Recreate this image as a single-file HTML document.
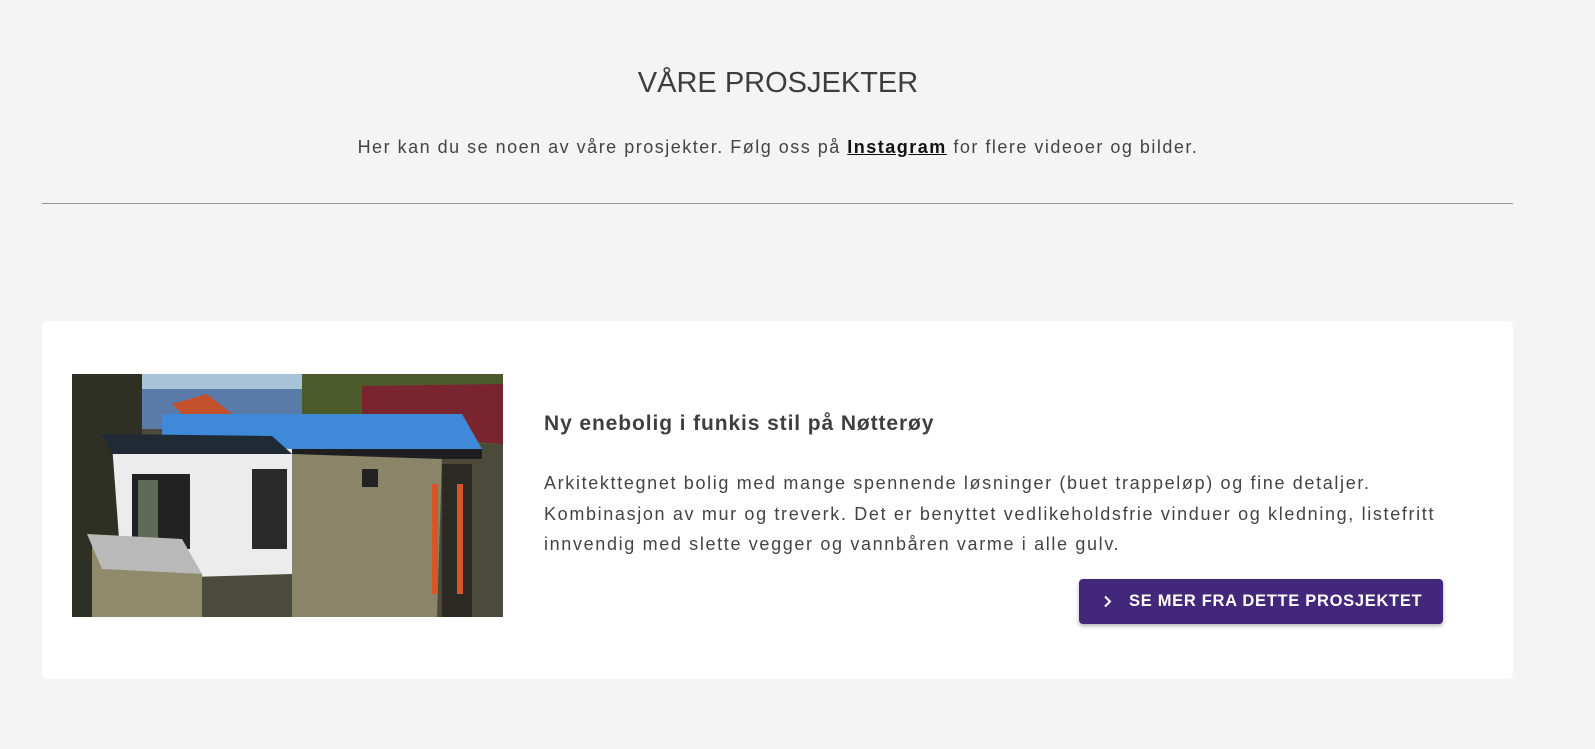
<!DOCTYPE html>
<html><head><meta charset="utf-8"><style>
body{margin:0;background:#f4f4f4;font-family:"Liberation Sans",sans-serif;color:#444;width:1595px;height:749px;overflow:hidden;position:relative}
h1{position:absolute;top:67px;left:0;width:1556px;text-align:center;margin:0;font-weight:normal;font-size:29px;color:#3d3d3d;letter-spacing:0}
.sub{position:absolute;top:137px;left:0;width:1556px;text-align:center;font-size:18px;color:#444;letter-spacing:1.5px}
.sub a{color:#111;font-weight:bold;text-decoration:underline}
.hr{position:absolute;top:203px;left:42px;width:1471px;height:1px;background:#999}
.card{position:absolute;left:42px;top:321px;width:1471px;height:358px;background:#fff;border-radius:6px}
.img{position:absolute;left:72px;top:374px;width:431px;height:243px;overflow:hidden;background:#5a5444}
h2{position:absolute;left:544px;top:412px;margin:0;font-size:21px;font-weight:bold;color:#3f3f3f;letter-spacing:0.9px}
.p{position:absolute;left:544px;top:468px;width:920px;font-size:18px;line-height:30.5px;color:#444;letter-spacing:1.65px}
.btn{position:absolute;left:1079px;top:579px;width:364px;height:45px;background:#42277a;border-radius:4px;box-shadow:0 2px 4px rgba(0,0,0,.3);color:#fff;font-size:16.5px;font-weight:bold;line-height:45px;letter-spacing:0.7px}
.btn span{position:absolute;left:50px}
.btn svg{position:absolute;left:24px;top:16px}
</style></head><body>
<h1>VÅRE PROSJEKTER</h1>
<div class="sub">Her kan du se noen av våre prosjekter. Følg oss på <a>Instagram</a> for flere videoer og bilder.</div>
<div class="hr"></div>
<div class="card"></div>
<div class="img"><svg width="431" height="243" viewBox="0 0 431 243">
<rect width="431" height="243" fill="#4c4a3a"/>
<rect width="431" height="20" fill="#a9c3d8"/>
<rect x="0" y="15" width="230" height="40" fill="#5a7aa8"/>
<rect x="230" y="0" width="201" height="70" fill="#4d5a2c"/>
<rect x="0" y="0" width="70" height="243" fill="#2d3022"/>
<polygon points="290,12 431,10 431,70 290,60" fill="#7a2430"/>
<polygon points="100,30 135,20 160,40 120,50" fill="#c2502a"/>
<polygon points="90,40 390,40 410,75 90,75" fill="#3f8ad8"/>
<rect x="90" y="75" width="320" height="10" fill="#1e1e1e"/>
<polygon points="220,80 370,85 365,243 220,243" fill="#8a8468"/>
<polygon points="40,70 220,75 220,200 50,205" fill="#ececec"/>
<polygon points="30,60 200,62 220,80 40,80" fill="#1f2a35"/>
<rect x="60" y="100" width="58" height="75" fill="#222"/>
<rect x="66" y="106" width="20" height="62" fill="#5d6a55"/>
<rect x="180" y="95" width="35" height="80" fill="#2a2a2a"/>
<polygon points="20,165 110,168 130,200 130,243 20,243" fill="#8f8a6a"/>
<polygon points="15,160 110,165 130,200 30,195" fill="#b9b9b9"/>
<rect x="370" y="90" width="30" height="153" fill="#2b2a25"/>
<rect x="360" y="110" width="6" height="110" fill="#d8542a"/>
<rect x="385" y="110" width="6" height="110" fill="#d8542a"/>
<rect x="290" y="95" width="16" height="18" fill="#222"/>
</svg></div>
<h2>Ny enebolig i funkis stil på Nøtterøy</h2>
<div class="p">Arkitekttegnet bolig med mange spennende løsninger (buet trappeløp) og fine detaljer.<br>Kombinasjon av mur og treverk. Det er benyttet vedlikeholdsfrie vinduer og kledning, listefritt<br>innvendig med slette vegger og vannbåren varme i alle gulv.</div>
<div class="btn"><svg width="10" height="13" viewBox="0 0 10 13"><path d="M2 1.5 L7 6.5 L2 11.5" stroke="#fff" stroke-width="2" fill="none"/></svg><span>SE MER FRA DETTE PROSJEKTET</span></div>
</body></html>
